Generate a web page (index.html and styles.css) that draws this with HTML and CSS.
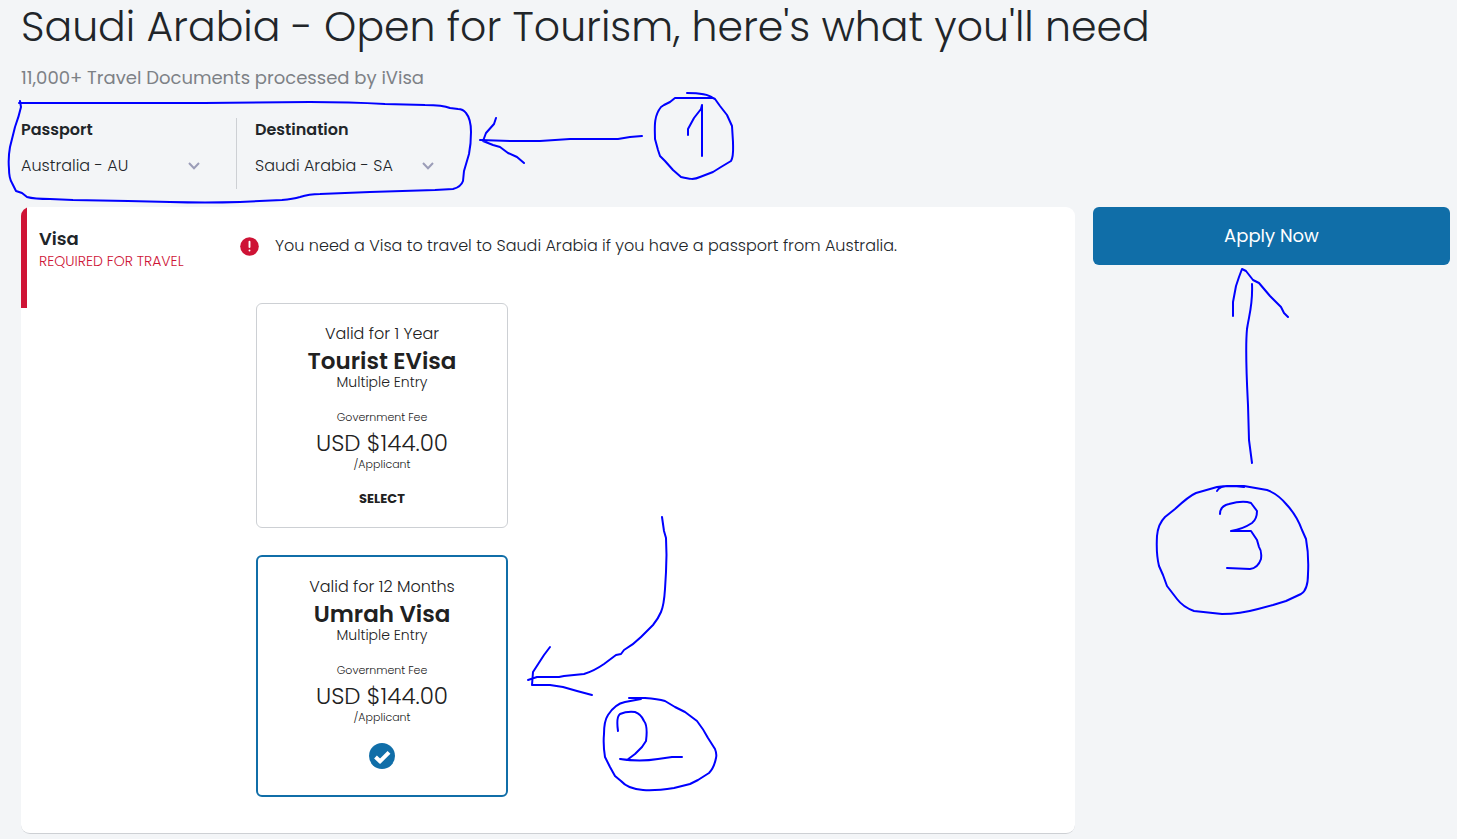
FILE: index.html
```html
<!DOCTYPE html>
<html lang="en">
<head>
<meta charset="utf-8">
<meta name="viewport" content="width=device-width, initial-scale=1">
<title>Saudi Arabia - Open for Tourism</title>
<link rel="stylesheet" href="styles.css">
</head>
<body>
<main class="page">
  <header class="intro">
    <h1 class="title">Saudi Arabia - Open for Tourism, here's what you'll need</h1>
    <p class="subtitle">11,000+ Travel Documents processed by iVisa</p>
  </header>

  <form class="route">
    <div class="field">
      <label class="field-label" for="passport">Passport</label>
      <div class="select-wrap">
        <select class="select" id="passport"><option>Australia - AU</option></select>
        <svg class="chevron" viewBox="0 0 12 8" aria-hidden="true"><path d="M1 1 6 6.200 11 1"/></svg>
      </div>
    </div>
    <div class="field">
      <label class="field-label" for="destination">Destination</label>
      <div class="select-wrap">
        <select class="select" id="destination"><option>Saudi Arabia - SA</option></select>
        <svg class="chevron" viewBox="0 0 12 8" aria-hidden="true"><path d="M1 1 6 6.200 11 1"/></svg>
      </div>
    </div>
  </form>

  <div class="columns">
    <section class="panel">
      <div class="requirement">
        <h2 class="requirement-name">Visa</h2>
        <p class="requirement-status">Required for travel</p>
      </div>
      <div class="details">
        <p class="notice">
          <svg class="alert" viewBox="0 0 20 20" aria-hidden="true"><circle cx="10" cy="10" r="9.800"/><path d="M10 5v5.500"/><path d="M10 14.200v.1"/></svg>
          <span>You need a Visa to travel to Saudi Arabia if you have a passport from Australia.</span>
        </p>
        <div class="options">
          <label class="option">
            <input class="option-input" type="radio" name="visa">
            <span class="validity">Valid for 1 Year</span>
            <span class="option-name">Tourist EVisa</span>
            <span class="entry">Multiple Entry</span>
            <span class="fee-label">Government Fee</span>
            <span class="price">USD $144.00</span>
            <span class="per">/Applicant</span>
            <span class="pick">SELECT</span>
          </label>
          <label class="option option-selected">
            <input class="option-input" type="radio" name="visa" checked>
            <span class="validity">Valid for 12 Months</span>
            <span class="option-name">Umrah Visa</span>
            <span class="entry">Multiple Entry</span>
            <span class="fee-label">Government Fee</span>
            <span class="price">USD $144.00</span>
            <span class="per">/Applicant</span>
            <svg class="check" viewBox="0 0 26 26" aria-hidden="true"><circle cx="13" cy="13" r="13"/><path d="M6.500 14 11 18.300 20 9.300"/></svg>
          </label>
        </div>
      </div>
    </section>
    <aside><button class="apply" type="button">Apply Now</button></aside>
  </div>
</main>

<svg class="ink" width="1457" height="839" viewBox="0 0 1457 839" aria-hidden="true">
  <path d="M20 101 21 107Q19 116 15 127L10 147Q8 158 9 169Q9 178 12 183L16 191 22 193 27 197Q34 199 50 199L73 200 128 201 170 202Q205 203 240 202L282 200Q293 199 300 197Q309 194 320 194L370 192 435 190 453 189Q461 187 463 181L464 171 469 154Q471 144 471 132Q471 119 466 113Q463 109 458 109L450 108Q443 105 425 105L385 104Q350 102 310 102L204 103 100 103 19 103"/>
  <path d="M642 136 630 137 618 139H570L540 141H510L480 140M496 118 494 124 486 133 483 141 493 145 500 147 508 153 517 157 524 163"/>
  <path d="M687 93C698 93 708 94 713 98M713 98H675L670 102 664 105 661 107C653 117 655 129 655 139L658 150 660 156 665 161 673 170 681 177C689 179 694 180 700 177L713 172 721 167 731 161C734 156 733 148 733 142L732 126 727 115 720 106 715 99ZM688 135V129L694 118 701 109 702 105V156"/>
  <path d="M662 517 664 531 666 538Q667 555 666 572L665 589Q664 605 661 612Q658 619 653 625L641 637Q633 645 624 650L621 654 616 655 604 664Q594 671 584 674L564 676 559 677H537L528 680M550 647 544 655 533 672 532 685H550L563 687 577 691 592 695"/>
  <path d="M629 698H645Q658 699 665 701L675 707 685 712 697 721Q704 730 708 738L715 749Q717 754 716 758Q714 768 709 773L698 780 690 784 674 788Q655 791 643 790Q628 789 621 781L615 776 610 767 605 757Q603 745 604 734Q604 721 608 715Q615 704 625 702L641 699M618 731Q616 717 620 714Q627 711 635 712Q641 714 644 721Q648 726 646 741L642 747 635 754 627 760 620 759Q640 762 658 759L672 757H682"/>
  <path d="M1233 316V302L1236 286 1239 277 1242 269 1246 271 1253 280 1259 283 1270 296 1281 307 1284 313 1288 317M1252 284C1253 305 1249 315 1247 329C1245 350 1247 385 1248 405L1249 440 1252 463"/>
  <path d="M1217 491Q1219 486 1230 486H1244L1267 490Q1278 494 1287 505Q1297 516 1302 530L1306 539Q1309 555 1308 574Q1308 590 1301 594L1286 601 1273 605 1258 609Q1240 614 1222 614L1194 611Q1183 607 1177 599L1167 586 1163 575 1159 566Q1156 554 1157 536Q1158 524 1165 517L1175 509Q1189 496 1196 493L1217 487Q1229 485 1244 487"/>
  <path d="M1220 514Q1220 506 1229 504Q1243 500 1251 503L1257 511Q1257 519 1252 523Q1243 529 1231 531H1251L1257 540 1259 547Q1262 551 1261 559Q1258 568 1250 569L1227 568"/>
</svg>
</body>
</html>
```
FILE: styles.css
```css
* {
  box-sizing: border-box;
}

body {
  margin: 0;
  background: #f3f5f7;
  color: #212529;
  font-family: Poppins, Inter, "Open Sans", sans-serif;
  font-weight: 300;
  position: relative;
}

h1, h2, p {
  margin: 0;
}

.page {
  padding: 0 7px 5px 21px;
}

.title {
  font-size: 41px;
  line-height: 54px;
  font-weight: 300;
}

.subtitle {
  margin-top: 10px;
  font-size: 18px;
  line-height: 27px;
  font-weight: 400;
  color: #7d8186;
}

.route {
  display: flex;
  margin-top: 27px;
  margin-bottom: 18px;
}

.field {
  width: 215px;
  height: 71px;
}

.field + .field {
  width: 234px;
  padding-left: 18px;
  border-left: 1px solid #cdd0d4;
}

.field-label {
  display: block;
  font-size: 16px;
  line-height: 24px;
  font-weight: 600;
}

.select-wrap {
  position: relative;
  width: 180px;
  margin-top: 12px;
}

.select {
  display: block;
  width: 100%;
  height: 24px;
  padding: 0;
  border: 0;
  appearance: none;
  background: transparent;
  color: inherit;
  font: inherit;
  font-size: 16px;
  line-height: 24px;
}

.chevron {
  position: absolute;
  top: 8px;
  right: 1px;
  width: 12px;
  height: 8px;
  pointer-events: none;
  fill: none;
  stroke: #9b9db8;
  stroke-width: 2;
}

.columns {
  display: grid;
  grid-template-columns: minmax(0, 1fr) 357px;
  gap: 18px;
}

.panel {
  display: flex;
  align-items: flex-start;
  overflow: hidden;
  padding-bottom: 36px;
  border-bottom: 1px solid #cdd0d4;
  border-radius: 9px;
  background: #fff;
}

.requirement {
  flex: none;
  width: 219px;
  height: 101px;
  padding: 18px 0 0 12px;
  border-left: 6px solid #ce1335;
}

.requirement-name {
  font-size: 18px;
  line-height: 27px;
  font-weight: 600;
}

.requirement-status {
  color: #ce1335;
  font-size: 14px;
  line-height: 18px;
  text-transform: uppercase;
}

.details {
  flex: 1;
  padding-top: 27px;
}

.notice {
  display: flex;
  align-items: center;
  gap: 16px;
  font-size: 16px;
  line-height: 24px;
}

.alert {
  flex: none;
  width: 19px;
  height: 19px;
  fill: #ce1335;
}

.alert path {
  stroke: #fff;
  stroke-width: 2;
  stroke-linecap: round;
}

.options {
  display: flex;
  flex-direction: column;
  gap: 27px;
  width: 252px;
  margin: 45px 0 0 16px;
}

.option {
  display: flex;
  flex-direction: column;
  align-items: center;
  position: relative;
  padding: 18px 16px;
  border: 1px solid #cdd0d4;
  border-radius: 6px;
  color: #212121;
  text-align: center;
  cursor: pointer;
}

.option-selected {
  padding: 18px 16px 26px;
  border: 2px solid #106ea8;
}

.option-input {
  position: absolute;
  opacity: 0;
}

.validity {
  font-size: 16px;
  line-height: 24px;
}

.option-name {
  margin-top: 1px;
  font-size: 23px;
  line-height: 28px;
  font-weight: 600;
}

.entry {
  font-size: 14px;
  line-height: 14px;
}

.fee-label {
  margin-top: 19px;
  font-size: 11px;
  line-height: 18px;
}

.price {
  margin-top: 3px;
  font-size: 23px;
  line-height: 28px;
}

.per {
  margin-top: 1px;
  font-size: 11px;
  line-height: 12px;
}

.pick {
  margin-top: 19px;
  font-size: 13px;
  line-height: 20px;
  font-weight: 700;
}

.check {
  width: 26px;
  height: 26px;
  margin-top: 20px;
  fill: #106ea8;
}

.check path {
  fill: none;
  stroke: #fff;
  stroke-width: 4;
}

.apply {
  width: 100%;
  height: 58px;
  padding: 0 0 2px;
  border: 0;
  border-radius: 6px;
  background: #106ea8;
  color: #fff;
  font: inherit;
  font-size: 18px;
  font-weight: 400;
}

.ink {
  position: absolute;
  top: 0;
  left: 0;
  pointer-events: none;
  fill: none;
  stroke: #0000ff;
  stroke-width: 2;
  stroke-linecap: round;
  stroke-linejoin: round;
}
```
